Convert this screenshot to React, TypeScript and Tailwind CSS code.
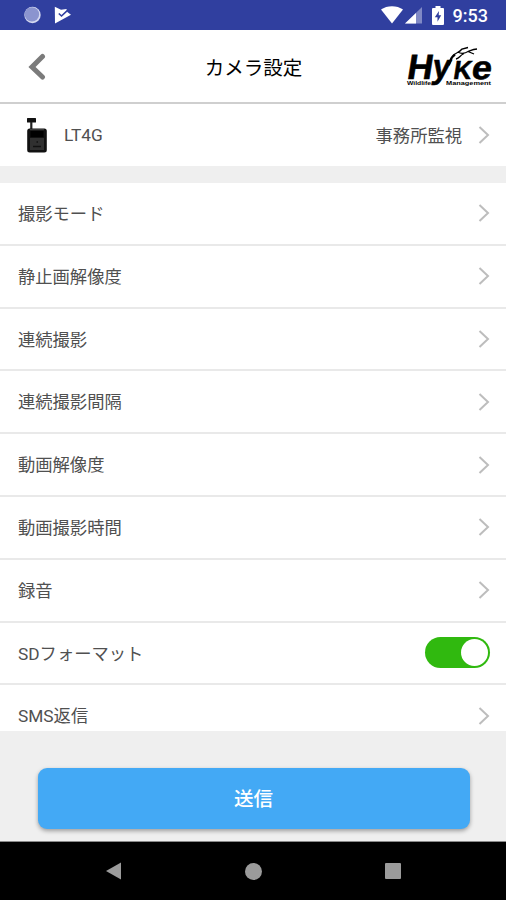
type Row = {
    label: string;
    toggle?: boolean;
};

const rows: Row[] = [
    { label: "撮影モード" },
    { label: "静止画解像度" },
    { label: "連続撮影" },
    { label: "連続撮影間隔" },
    { label: "動画解像度" },
    { label: "動画撮影時間" },
    { label: "録音" },
    { label: "SDフォーマット", toggle: true },
    { label: "SMS返信" }
];

function Chevron() {
    return (
        <svg width="12" height="18" viewBox="0 0 12 18" fill="none" className="shrink-0">
            <path d="M1.5 1 L10 9 L1.5 17" stroke="#bdbdbd" strokeWidth="2" />
        </svg>
    );
}

function StatusBar() {
    return (
        <div className="flex h-[30px] shrink-0 items-center justify-between bg-[#303f9f] pl-[23px] pr-[18px]">
            <div className="flex items-center gap-[12px]">
                <svg width="19" height="18" viewBox="0 0 19 18">
                    <circle cx="9.5" cy="9" r="8.2" fill="#d5d9f0" />
                    <circle cx="8.9" cy="8.4" r="7.2" fill="#8b94cf" />
                </svg>
                <svg width="18" height="18" viewBox="0 0 18 18">
                    <path d="M.8 .7 L7 3.8 L12.5 3 L13.3 6 L17 8.8 L1 17.5 Z" fill="#fff" />
                    <path d="M4.8 7.5 L7.5 10 L13.5 4.3" stroke="#303f9f" strokeWidth="1.6" fill="none" />
                </svg>
            </div>
            <div className="flex items-center">
                <svg width="22" height="18" viewBox="0 0 22 18">
                    <path d="M0 3.6 C6 -1 16 -1 22 3.6 L11 17.5 Z" fill="#fff" />
                </svg>
                <svg width="18" height="18" viewBox="0 0 18 18" className="ml-[2px]">
                    <path d="M17 1 V17.5 H0 Z" fill="#8089c5" />
                    <path d="M11 7 V17.5 H0 Z" fill="#fff" />
                </svg>
                <svg width="12" height="19" viewBox="0 0 12 19" className="ml-[9px]">
                    <path d="M3.5 0 H8.5 V2 H11 Q12 2 12 3 V18 Q12 19 11 19 H1 Q0 19 0 18 V3 Q0 2 1 2 H3.5 Z" fill="#fff" />
                    <path d="M7 5 L2.8 11.2 H5.5 V15.7 L9.2 9.2 H6.7 Z" fill="#303f9f" />
                </svg>
                <span className="ml-[9px] pt-[2px] font-['Roboto',sans-serif] text-[18px] font-medium leading-[28px] text-white">9:53</span>
            </div>
        </div>
    );
}

function Logo() {
    return (
        <svg width="90" height="42" viewBox="0 0 90 42" fontFamily="'Liberation Sans', sans-serif" fontWeight="bold">
            <g transform="translate(5.5 0) skewX(-9)" stroke="#000" strokeWidth=".6">
                <text x="2" y="34" fontSize="35" textLength="25.5" lengthAdjust="spacingAndGlyphs">H</text>
                <text x="48.5" y="34" fontSize="26" textLength="18" lengthAdjust="spacingAndGlyphs">K</text>
                <text x="66.5" y="34" fontSize="33" textLength="20" lengthAdjust="spacingAndGlyphs">e</text>
            </g>
            <g transform="translate(5 0) skewX(-10)" stroke="#000" strokeWidth=".6">
                <text x="28" y="33.5" fontSize="34" textLength="18" lengthAdjust="spacingAndGlyphs">y</text>
            </g>
            {/* antlers */}
            <path d="M44.5 20 C47 16 46.5 12 51 9.5" fill="none" stroke="#000" strokeWidth="2.4" />
            <path d="M49 11 C52 7 55 8 58 4 L64 2.5 M54 7 C57 9 61 8.5 65 6 C68 5 69 4.5 73 4 M52 14 C56 13 55 11 60 8.5 M64 6.5 L70 9" fill="none" stroke="#000" strokeWidth="1.3" />
            <text x="3" y="40" fontSize="5.5" textLength="24" lengthAdjust="spacingAndGlyphs">Wildlife</text>
            <text x="42" y="40" fontSize="5.5" textLength="45" lengthAdjust="spacingAndGlyphs">Management</text>
        </svg>
    );
}

function Header() {
    return (
        <header className="flex h-[74px] shrink-0 items-center border-b-2 border-[#cfcfcf] bg-white pl-[28px] pr-[12px]">
            <div className="flex-1">
                <svg width="18" height="28" viewBox="0 0 18 28" fill="none" className="mt-[2px]">
                    <path d="M14.5 3.5 L4 14 L14.5 24" stroke="#7b7b7b" strokeWidth="5" strokeLinecap="round" />
                </svg>
            </div>
            <h1 className="mr-[15px] pt-[5px] text-[19.5px] font-normal text-black">カメラ設定</h1>
            <div className="flex flex-1 justify-end">
                <Logo />
            </div>
        </header>
    );
}

function CameraIcon() {
    return (
        <svg width="22" height="36" viewBox="0 0 22 36">
            <rect x="1" y="1" width="9" height="4.5" rx=".5" fill="#111" />
            <path d="M5.3 5 V13" stroke="#222" strokeWidth="2.2" />
            <rect x="1.2" y="11.5" width="19.6" height="24" rx="2.5" fill="#111" />
            <rect x="4" y="21" width="14" height="12" fill="#303030" />
            <rect x="4.5" y="14" width="13" height="6" fill="#000" />
            <path d="M4 12.7 H18" stroke="#444" />
            <path d="M7 29.5 H15 M10.5 25 H12" stroke="#111" strokeWidth="1.5" />
        </svg>
    );
}

export default function App() {
    return (
        <div className="flex h-[900px] w-[506px] flex-col overflow-hidden bg-[#efefef] font-['Roboto','Noto_Sans_CJK_JP',sans-serif] text-[17.3px] text-[#505050]">
            <StatusBar />
            <Header />

            {/* Selected camera */}
            <div className="flex h-[62px] shrink-0 items-center bg-white pl-[26px] pr-[16px]">
                <CameraIcon />
                <span className="ml-[16px] pt-px">LT4G</span>
                <span className="ml-auto mr-[16px] pt-[3px]">事務所監視</span>
                <Chevron />
            </div>

            {/* Settings */}
            <div className="mt-[17px] h-[548px] shrink-0 overflow-hidden">
                {rows.map((row) => (
                    <div key={row.label} className="flex h-[62.8px] items-center justify-between border-b-2 border-[#e9e9e9] bg-white pl-[18px] pr-[16px]">
                        <span className="pt-[3px]">{row.label}</span>
                        {row.toggle ? (
                            <div className="flex h-[31px] w-[65px] items-center justify-end rounded-full bg-[#30b90f] pr-[2px]">
                                <div className="size-[27px] rounded-full bg-white"></div>
                            </div>
                        ) : (
                            <Chevron />
                        )}
                    </div>
                ))}
            </div>

            <div className="flex flex-1 items-start justify-center pt-[37px]">
                <button className="mr-[-1px] h-[61px] w-[432px] rounded-[9px] bg-[#43a9f5] pt-[3px] text-[19.5px] font-medium text-white shadow-[0_2px_4px_rgba(0,0,0,0.35)]">送信</button>
            </div>

            <nav className="flex h-[59px] shrink-0 items-center justify-between border-t border-[#8a8a8a] bg-black px-[105px]">
                <svg width="17" height="18" viewBox="0 0 17 18">
                    <path d="M16 .5 V17.5 L1 9 Z" fill="#9b9b9b" />
                </svg>
                <div className="size-[17px] rounded-full bg-[#9b9b9b]"></div>
                <div className="size-[16px] rounded-[1px] bg-[#9b9b9b]"></div>
            </nav>
        </div>
    );
}
